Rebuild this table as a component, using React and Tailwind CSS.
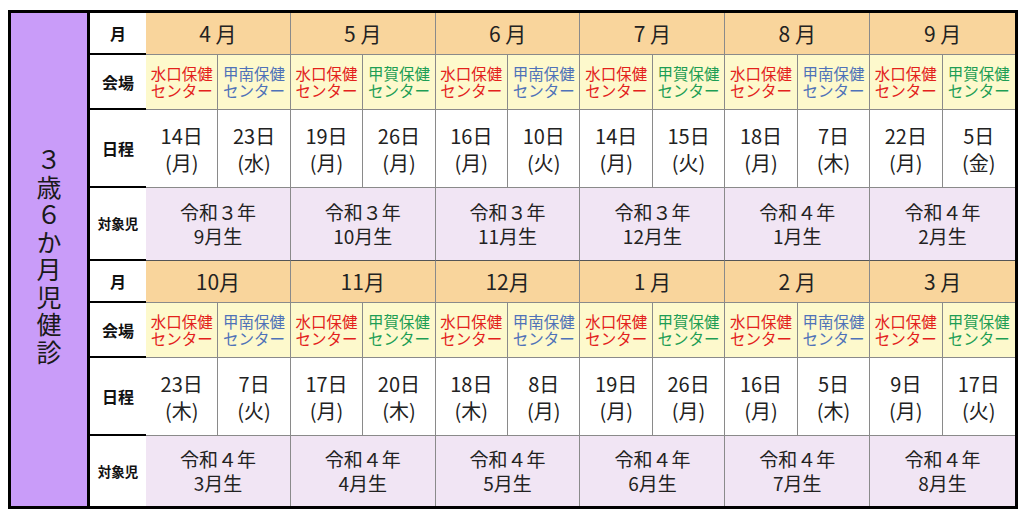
import React from 'react'

const venues = {
  minakuchi: { name: '水口保健', color: 'text-[#e3221c]' },
  konan: { name: '甲南保健', color: 'text-[#4f72b8]' },
  koka: { name: '甲賀保健', color: 'text-[#1e9e55]' }
}

const halves = [
  [
    { month: '4 月', sessions: [['minakuchi', '14日', '(月)'], ['konan', '23日', '(水)']], year: '令和３年', born: '9月生' },
    { month: '5 月', sessions: [['minakuchi', '19日', '(月)'], ['koka', '26日', '(月)']], year: '令和３年', born: '10月生' },
    { month: '6 月', sessions: [['minakuchi', '16日', '(月)'], ['konan', '10日', '(火)']], year: '令和３年', born: '11月生' },
    { month: '7 月', sessions: [['minakuchi', '14日', '(月)'], ['koka', '15日', '(火)']], year: '令和３年', born: '12月生' },
    { month: '8 月', sessions: [['minakuchi', '18日', '(月)'], ['konan', '7日', '(木)']], year: '令和４年', born: '1月生' },
    { month: '9 月', sessions: [['minakuchi', '22日', '(月)'], ['koka', '5日', '(金)']], year: '令和４年', born: '2月生' }
  ],
  [
    { month: '10月', sessions: [['minakuchi', '23日', '(木)'], ['konan', '7日', '(火)']], year: '令和４年', born: '3月生' },
    { month: '11月', sessions: [['minakuchi', '17日', '(月)'], ['koka', '20日', '(木)']], year: '令和４年', born: '4月生' },
    { month: '12月', sessions: [['minakuchi', '18日', '(木)'], ['konan', '8日', '(月)']], year: '令和４年', born: '5月生' },
    { month: '1 月', sessions: [['minakuchi', '19日', '(月)'], ['koka', '26日', '(月)']], year: '令和４年', born: '6月生' },
    { month: '2 月', sessions: [['minakuchi', '16日', '(月)'], ['konan', '5日', '(木)']], year: '令和４年', born: '7月生' },
    { month: '3 月', sessions: [['minakuchi', '9日', '(月)'], ['koka', '17日', '(火)']], year: '令和４年', born: '8月生' }
  ]
]

function Label({ children, small, last }) {
  return (
    <div className={`flex items-center justify-center bg-white font-bold text-[#111] ${last ? '' : 'border-b-2 border-black'} ${small ? 'text-[13.5px]' : 'text-[16px]'}`}>
      {children}
    </div>
  )
}

function Half({ months, last }) {
  return (
    <>
      <Label>月</Label>
      {months.map((m, i) =>
        <div key={m.month} className={`col-span-2 flex items-center justify-center bg-[#f9d59c] border-b border-[#8a8a8a] text-[21px] text-[#222] ${i < 5 ? 'border-r' : ''}`}>
          {m.month}
        </div>
      )}

      <Label>会場</Label>
      {months.map((m, i) => m.sessions.map((s, j) =>
        <div key={m.month + j} className={`flex items-center justify-center text-center bg-[#fdf9cc] border-b border-[#8a8a8a] text-[15.5px] leading-[17px] ${venues[s[0]].color} ${i < 5 || j === 0 ? 'border-r' : ''}`}>
          <p>{venues[s[0]].name}<br />センター</p>
        </div>
      ))}

      <Label>日程</Label>
      {months.map((m, i) => m.sessions.map((s, j) =>
        <div key={m.month + 'd' + j} className={`flex items-center justify-center text-center bg-white border-b border-[#8a8a8a] text-[20px] leading-[27px] text-[#222] ${i < 5 || j === 0 ? 'border-r' : ''}`}>
          <p>{s[1]}<br />{s[2]}</p>
        </div>
      ))}

      <Label small last={last}>対象児</Label>
      {months.map((m, i) =>
        <div key={m.month + 't'} className={`col-span-2 flex items-center justify-center text-center bg-[#f1e5f4] text-[19px] leading-[24px] text-[#222] ${last ? '' : 'border-b border-[#555]'} ${i < 5 ? 'border-r border-r-[#8a8a8a]' : ''}`}>
          <p>{m.year}<br />{m.born}</p>
        </div>
      )}
    </>
  )
}

export default function App() {
  return (
    <div className="w-[1024px] h-[512px] bg-white pt-[10px] pl-[8px]" style={{ fontFamily: '"Noto Sans CJK JP", "Noto Sans", sans-serif' }}>
      <div className="w-[1010px] h-[499px] border-[3px] border-black grid grid-cols-[79px_56px_repeat(12,1fr)] grid-rows-[42px_55px_78px_73px_42px_55px_78px_70px]">
        <div className="row-span-8 bg-[#c99cf9] border-r-[3px] border-black flex items-center justify-center pb-[6px]">
          <p className="[writing-mode:vertical-rl] text-[25px] leading-[30px] tracking-[2.5px] text-[#1a1a1a]">３歳６か月児健診</p>
        </div>
        <div className="row-span-8 col-span-13 grid grid-cols-[subgrid] grid-rows-[subgrid]">
          <Half months={halves[0]} />
          <Half months={halves[1]} last />
        </div>
      </div>
    </div>
  )
}
